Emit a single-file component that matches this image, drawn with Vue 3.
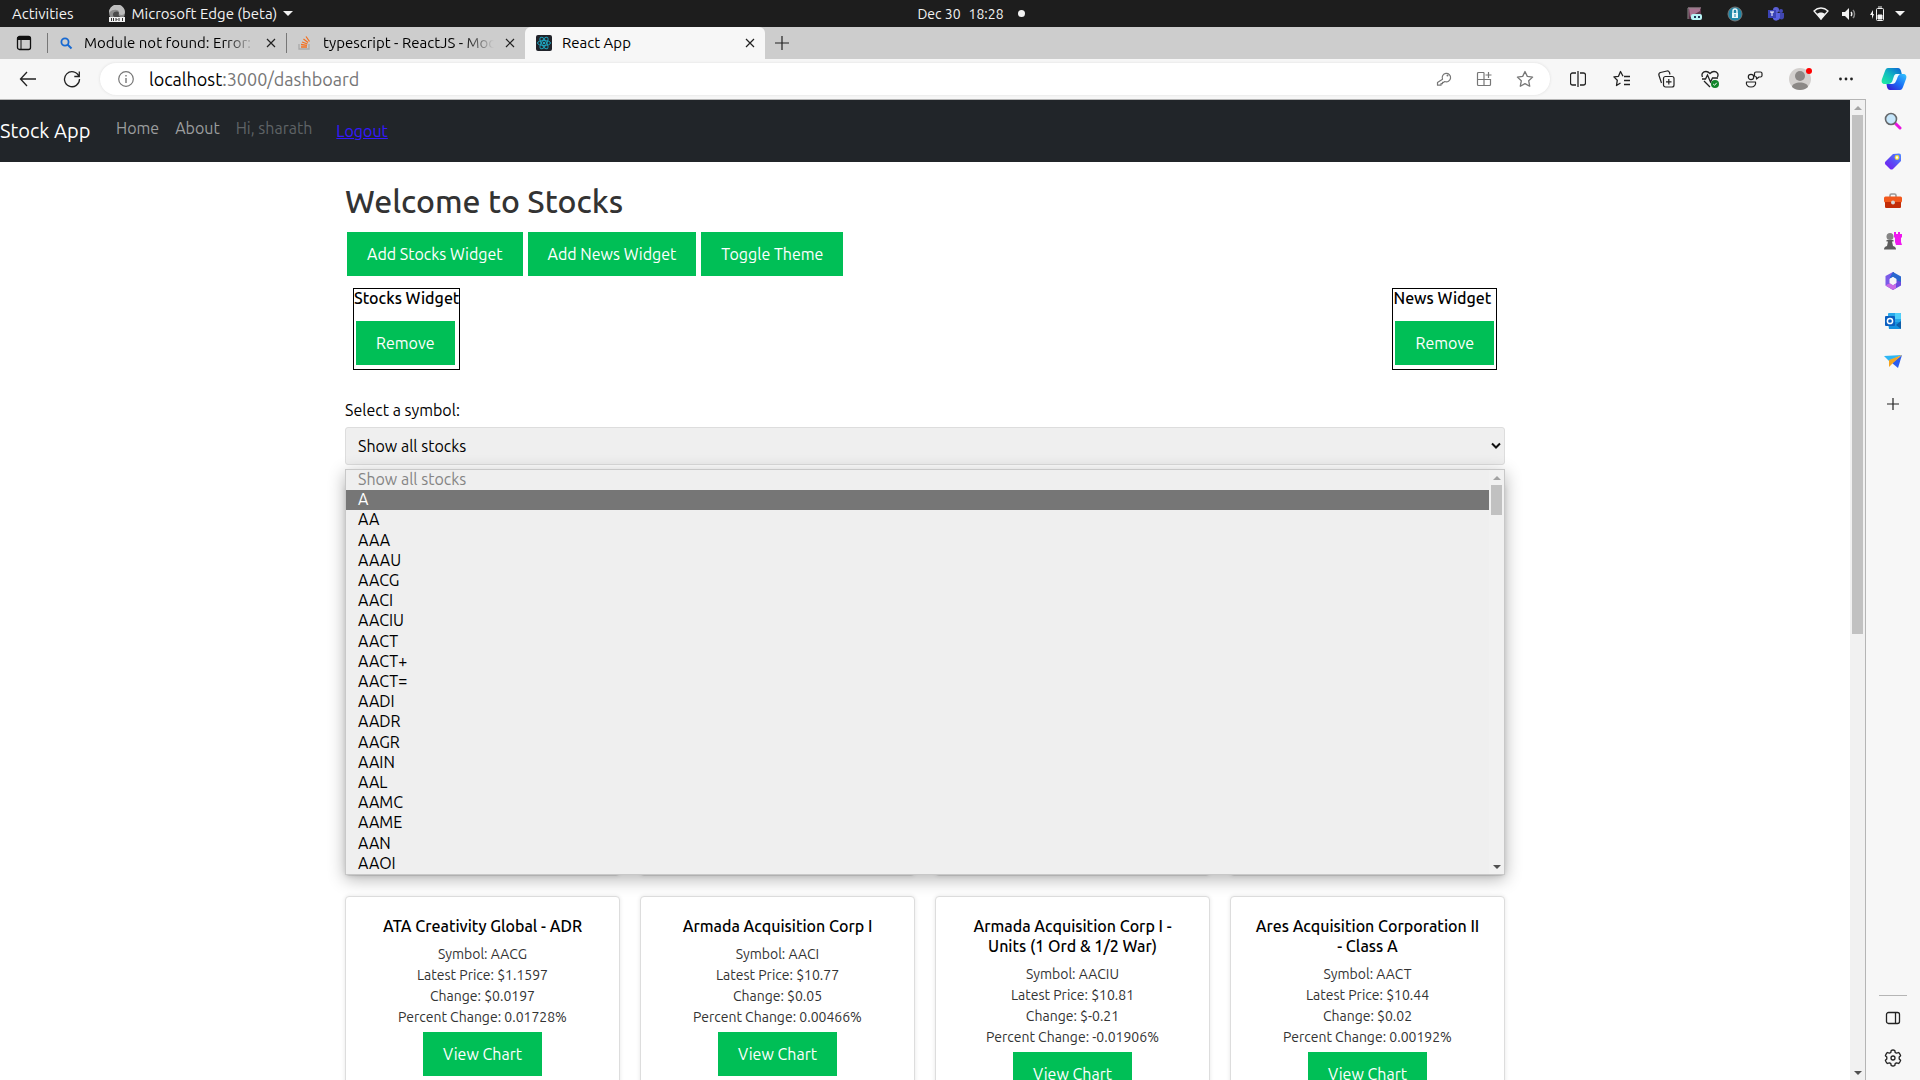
<script setup>
import { ref } from 'vue'

const backTabs = [
  { title: 'Module not found: Error:', icon: 'search' },
  { title: 'typescript - ReactJS - Mod', icon: 'stack' }
]

const symbols = [
  'A', 'AA', 'AAA', 'AAAU', 'AACG', 'AACI', 'AACIU', 'AACT', 'AACT+', 'AACT=',
  'AADI', 'AADR', 'AAGR', 'AAIN', 'AAL', 'AAMC', 'AAME', 'AAN', 'AAOI'
]
const selected = ref('')
const active = ref('A')

const stocks = [
  { name: 'ATA Creativity Global - ADR', symbol: 'AACG', price: '1.1597', change: '0.0197', percent: '0.01728' },
  { name: 'Armada Acquisition Corp I', symbol: 'AACI', price: '10.77', change: '0.05', percent: '0.00466' },
  { name: 'Armada Acquisition Corp I - Units (1 Ord & 1/2 War)', symbol: 'AACIU', price: '10.81', change: '-0.21', percent: '-0.01906' },
  { name: 'Ares Acquisition Corporation II - Class A', symbol: 'AACT', price: '10.44', change: '0.02', percent: '0.00192' }
]
</script>

<template>
  <div class="screen">
    <header class="topbar">
      <div class="top-left">
        <span>Activities</span>
        <span class="app-menu">
          <svg width="18" height="18" viewBox="0 0 18 18">
            <circle cx="9" cy="8" r="8" fill="#8d8d8d" />
            <path d="M1 8a8 8 0 0 1 16-1c0 3-4 4-6 2 1-3-2-5-5-4-3 0-4 2-5 3z" fill="#bdbdbd" />
            <path d="M5 9c1-3 5-3 6-1-1 2 0 4 3 4H7C5 12 5 10 5 9z" fill="#4a4a4a" />
            <rect x="1" y="12" width="16" height="5" fill="#f2f2f2" />
            <path d="M3.500 13v3M5.500 13v3M8 13v3M8.500 14.500h1M11 13v3M14.500 13v3" stroke="#333" fill="none" />
          </svg>
          <span>Microsoft Edge (beta)</span>
          <svg width="10" height="6" viewBox="0 0 10 6"><path d="M0 0h10L5 5z" fill="#f2f2f2" /></svg>
        </span>
      </div>
      <div class="clock"><span>Dec 30</span><span>18:28</span><i class="dot"></i></div>
      <div class="tray">
        <svg width="16" height="16" viewBox="0 0 16 16">
          <rect x="1" y="1" width="13" height="12" fill="#5c3348" /><path d="M2 2h11v3L3 11z" fill="#a97391" />
          <path d="M1 13V2h13" stroke="#888" fill="none" />
          <rect x="4" y="8" width="11" height="6" rx="2" fill="#b7f3f5" /><path d="M7 11h2M12 10v2" stroke="#235" stroke-width="2" />
        </svg>
        <svg width="16" height="16" viewBox="0 0 16 16">
          <circle cx="8" cy="8" r="7" fill="#1f87a8" stroke="#777" /><rect x="5" y="7" width="6" height="5" fill="#e8f6fa" />
          <path d="M6 7V5a2 2 0 0 1 4 0v2" stroke="#e8f6fa" stroke-width="1.500" fill="none" /><path d="M8 8v3" stroke="#1f87a8" />
        </svg>
        <svg width="18" height="16" viewBox="0 0 18 16">
          <circle cx="9" cy="4" r="3" fill="#5b5fd6" /><circle cx="14" cy="5" r="2" fill="#454bb8" />
          <path d="M6 7h7v5a4 4 0 0 1-7 1z" fill="#5b62e0" /><path d="M13 7h4v4c0 2-2 3-4 2z" fill="#4147b0" />
          <rect x="1" y="4" width="8" height="8" fill="#3b43b5" /><path d="M3 6h4M5 6v4" stroke="#fff" />
        </svg>
        <svg class="wifi" width="16" height="14" viewBox="0 0 16 14">
          <path d="M1 4c4-4 10-4 14 0L8 12z" fill="none" stroke="#f2f2f2" stroke-width="1.3" /><path d="M4 7c2-2 6-2 8 0l-4 6z" fill="#f2f2f2" />
        </svg>
        <svg width="16" height="14" viewBox="0 0 16 14">
          <path d="M1 5h3l4-4v12L4 9H1z" fill="#f2f2f2" /><path d="M10 5c1 1 1 3 0 4" fill="none" stroke="#f2f2f2" stroke-width="1.5" /><path d="M12 3c2 2 2 6 0 8" fill="none" stroke="#888" stroke-width="1.5" />
        </svg>
        <svg class="battery" width="16" height="16" viewBox="0 0 16 16">
          <path d="M4 4 1 9h2v4l2-5H4z" fill="#f2f2f2" /><rect x="7.5" y="2.5" width="7" height="12" rx="1" fill="none" stroke="#f2f2f2" /><path d="M9 1h4M9 9h4v4H9z" fill="#f2f2f2" stroke="#f2f2f2" />
        </svg>
        <svg class="caret" width="10" height="6" viewBox="0 0 10 6"><path d="M0 0h10L5 5z" fill="#f2f2f2" /></svg>
      </div>
    </header>

    <div class="tabstrip">
      <button class="tab-actions" aria-label="Tab actions">
        <svg width="16" height="16" viewBox="0 0 16 16"><rect x="1.5" y="1.5" width="13" height="13" rx="2" fill="none" stroke="#111" stroke-width="1.3" /><path d="M1 2h14v3H1z" fill="#111" /><path d="M5 5v9" stroke="#111" /></svg>
      </button>
      <div v-for="tab in backTabs" :key="tab.icon" class="tab">
        <svg v-if="tab.icon === 'search'" width="14" height="14" viewBox="0 0 14 14"><circle cx="6" cy="6" r="3.6" fill="none" stroke="#1769d2" stroke-width="1.8" /><path d="m8.500 8.500 4 4" stroke="#1769d2" stroke-width="2" /></svg>
        <svg v-else width="14" height="16" viewBox="0 0 14 16"><path d="M1 9v5h10V9" fill="none" stroke="#a9a9a9" stroke-width="1.3" /><path d="M3 12h6M3 9.500l6 .8M4 7l5.500 2M5.500 4l4.500 3.500M8 1.500l3.500 5" stroke="#f37021" stroke-width="1.3" fill="none" /></svg>
        <span class="tab-title faded">{{ tab.title }}</span>
        <button class="close" aria-label="Close tab"><svg width="10" height="10" viewBox="0 0 10 10"><path d="m1 1 8 8M9 1 1 9" stroke="#222" stroke-width="1.2" /></svg></button>
      </div>
      <div class="tab current">
        <svg width="16" height="16" viewBox="0 0 16 16"><rect width="16" height="16" rx="2" fill="#20232a" /><g fill="none" stroke="#1ea2bd"><ellipse cx="8" cy="8" rx="6.500" ry="2.500" /><ellipse cx="8" cy="8" rx="6.500" ry="2.500" transform="rotate(60 8 8)" /><ellipse cx="8" cy="8" rx="6.500" ry="2.500" transform="rotate(120 8 8)" /></g><circle cx="8" cy="8" r="1.300" fill="#1ea2bd" /></svg>
        <span class="tab-title">React App</span>
        <button class="close" aria-label="Close tab"><svg width="10" height="10" viewBox="0 0 10 10"><path d="m1 1 8 8M9 1 1 9" stroke="#222" stroke-width="1.2" /></svg></button>
      </div>
      <button class="new-tab" aria-label="New tab"><svg width="14" height="14" viewBox="0 0 14 14"><path d="M7 0v14M0 7h14" stroke="#222" stroke-width="1.2" /></svg></button>
    </div>

    <div class="toolbar">
      <button class="tool" aria-label="Back"><svg width="18" height="16" viewBox="0 0 18 16"><path d="M8 1 1.500 8 8 15M1.500 8H17" fill="none" stroke="#222" stroke-width="1.3" /></svg></button>
      <button class="tool" aria-label="Refresh"><svg width="18" height="18" viewBox="0 0 18 18"><path d="M16 6.500A7.500 7.500 0 1 0 16.500 9M16.300 1.500v5h-5" fill="none" stroke="#222" stroke-width="1.3" /></svg></button>
      <div class="address">
        <svg width="16" height="16" viewBox="0 0 16 16"><circle cx="8" cy="8" r="7.300" fill="none" stroke="#777" stroke-width="1.200" /><path d="M8 7v5M8 4v1.500" stroke="#777" stroke-width="1.400" /></svg>
        <span class="url"><b>localhost</b>:3000/dashboard</span>
        <svg width="16" height="16" viewBox="0 0 16 16"><path d="M6.500 8.200a4.200 4.200 0 1 1 2.300 2.300L7.700 11.300H6.500v1.400H5v1.500H1.500v-2.700z" fill="none" stroke="#777" stroke-width="1.200" stroke-linejoin="round" /><circle cx="11.500" cy="4.500" r="1" fill="#777" /></svg>
        <svg width="16" height="16" viewBox="0 0 16 16"><path d="M8 1.500H2.500a1 1 0 0 0-1 1v11a1 1 0 0 0 1 1h11a1 1 0 0 0 1-1V8.500h-13M8 1.500v13M12.500 1v6M9.500 4h6" fill="none" stroke="#777" stroke-width="1.200" /></svg>
        <svg width="18" height="18" viewBox="0 0 18 18"><path d="m9 1.500 2.300 4.900 5.300.7-3.900 3.700 1 5.400L9 13.600l-4.700 2.600 1-5.400L1.400 7.100l5.300-.7z" fill="none" stroke="#777" stroke-width="1.300" stroke-linejoin="round" /></svg>
      </div>
      <div class="tools">
        <button class="tool" aria-label="Split screen"><svg width="16" height="18" viewBox="0 0 16 18"><path d="M6 3H2.500a2 2 0 0 0-2 2v8a2 2 0 0 0 2 2H6M10 3h3.500a2 2 0 0 1 2 2v8a2 2 0 0 1-2 2H10M8 1v16" fill="none" stroke="#222" stroke-width="1.300" /></svg></button>
        <button class="tool" aria-label="Favorites"><svg width="18" height="18" viewBox="0 0 18 18"><path d="M10 6.300 7.500 1.500 5.500 6.300l-4.600.6 3.400 3.300-.8 5.300L7.500 13M11 6.500h6M11 10.500h6M11 14.500h6" fill="none" stroke="#222" stroke-width="1.300" stroke-linejoin="round" /></svg></button>
        <button class="tool" aria-label="Collections"><svg width="18" height="18" viewBox="0 0 18 18"><rect x="6.500" y="6.500" width="10.500" height="10.500" rx="2" fill="none" stroke="#222" stroke-width="1.200" /><path d="M11.800 9v5.500M9 11.800h5.500M4.500 13 2 5.500C1.500 4 2 3 3.500 2.500L10 1c1.500-.3 2 .5 2.500 1.500l.5 2" fill="none" stroke="#222" stroke-width="1.200" /></svg></button>
        <button class="tool" aria-label="Browser essentials"><svg width="18" height="18" viewBox="0 0 18 18"><path d="M1.500 7C0 4 2 1.500 5 1.500c2 0 3 1 4 2 1-1 2-2 4-2 3 0 5 2.500 3.500 5.500M1 9h3.500L6.500 5l3 7 2-4h5.500M3 11l6 6" fill="none" stroke="#222" stroke-width="1.300" /><circle cx="14" cy="14" r="4" fill="#12852a" /><path d="m12.200 14 1.300 1.300 2.200-2.500" fill="none" stroke="#fff" /></svg></button>
        <button class="tool" aria-label="Feedback"><svg width="18" height="18" viewBox="0 0 18 18"><circle cx="6" cy="7" r="2.700" fill="none" stroke="#222" stroke-width="1.200" /><path d="M1.500 12h9c.8 3-1.500 5-4.500 5s-5.300-2-4.500-5zM11 2h4.500c1.200 0 1.500.5 1.500 1.500v2C17 6.500 16.500 7 15.500 7H14l-2.500 2V7C10 7 9.500 6.500 9.500 5.500v-2C9.500 2.500 10 2 11 2z" fill="none" stroke="#222" stroke-width="1.200" stroke-linejoin="round" /></svg></button>
        <button class="tool profile" aria-label="Profile"><svg width="24" height="24" viewBox="0 0 24 24"><circle cx="12" cy="12" r="11" fill="#d3d0ce" /><circle cx="12" cy="9" r="5" fill="#8b8886" /><path d="M4 20c0-6 16-6 16 0-4 4-12 4-16 0z" fill="#8b8886" /><circle cx="21" cy="4" r="3" fill="#f00" /></svg></button>
        <button class="tool" aria-label="More"><svg width="16" height="4" viewBox="0 0 16 4"><g fill="#222"><circle cx="2.500" cy="2" r="1.400" /><circle cx="8" cy="2" r="1.400" /><circle cx="13.500" cy="2" r="1.400" /></g></svg></button>
      </div>
      <button class="tool copilot" aria-label="Copilot">
        <svg width="26" height="24" viewBox="0 0 26 24">
          <defs>
            <linearGradient id="cpA" x1="0" y1="1" x2="1" y2="0"><stop offset="0" stop-color="#1ff2a0" /><stop offset=".5" stop-color="#12b8c0" /><stop offset="1" stop-color="#0a5bd8" /></linearGradient>
            <linearGradient id="cpB" x1="0" y1="1" x2="1" y2="0"><stop offset="0" stop-color="#3a0fd0" /><stop offset=".5" stop-color="#1a6ff5" /><stop offset="1" stop-color="#35c8ff" /></linearGradient>
          </defs>
          <path d="M7 1h10c1.500 0 2.500 1 3 3l.8 3H18c-2 0-3 1-3.500 3l-1.500 5c-.5 1-1 2-3 2H4c-3 0-4-2-3-5l3-8c.7-2 1.500-3 3-3z" fill="url(#cpA)" />
          <path d="M19 23H9c-1.500 0-2.500-1-3-3l-.5-3H9c2 0 3-1 3.500-3L14 9c.5-1 1-2 3-2h5c3 0 4 2 3 5l-3 8c-.7 2-1.500 3-3 3z" fill="url(#cpB)" />
          <path d="M15 7h4l-1 1c-1 1-1.500 2-2 4l-1 2c-.5 2-2 3-4 3H8l2-1c1-1 1.500-2 2-4l1-3c.5-1 1-2 2-2z" fill="#eefaff" />
        </svg>
      </button>
    </div>

    <div class="body">
      <div class="page">
        <nav class="navbar">
          <a class="brand" href="#">Stock App</a>
          <a class="nav-link" href="#">Home</a>
          <a class="nav-link" href="#">About</a>
          <span class="nav-link user">Hi, sharath</span>
          <a class="logout" href="#">Logout</a>
        </nav>

        <main class="container">
          <h1>Welcome to Stocks</h1>
          <div class="actions">
            <button class="btn">Add Stocks Widget</button>
            <button class="btn">Add News Widget</button>
            <button class="btn">Toggle Theme</button>
          </div>
          <div class="widgets">
            <section class="widget"><h2>Stocks Widget</h2><button class="btn">Remove</button></section>
            <section class="widget"><h2>News Widget</h2><button class="btn">Remove</button></section>
          </div>

          <label class="symbol-label" for="symbol">Select a symbol:</label>
          <div class="picker">
            <select id="symbol" v-model="selected">
              <option value="">Show all stocks</option>
              <option v-for="s in symbols" :key="s" :value="s">{{ s }}</option>
            </select>
            <svg class="chevron" width="10" height="8" viewBox="0 0 10 8"><path d="m1 1.500 4 4 4-4" fill="none" stroke="#111" stroke-width="2" /></svg>
            <div class="popup">
              <ul role="listbox" aria-label="Symbols">
                <li class="disabled" role="option" aria-disabled="true">Show all stocks</li>
                <li v-for="s in symbols" :key="s" role="option" :class="{ active: s === active }" @mouseenter="active = s">{{ s }}</li>
              </ul>
              <div class="popup-scroll">
                <svg width="8" height="4" viewBox="0 0 8 4"><path d="M0 4h8L4 0z" fill="#a3a3a3" /></svg>
                <i></i>
                <svg class="down" width="8" height="4" viewBox="0 0 8 4"><path d="M0 0h8L4 4z" fill="#505050" /></svg>
              </div>
            </div>
          </div>

          <div class="cards">
            <div v-for="n in 4" :key="n" class="card covered"></div>
            <article v-for="stock in stocks" :key="stock.symbol" class="card">
              <h3>{{ stock.name }}</h3>
              <p>Symbol: {{ stock.symbol }}</p>
              <p>Latest Price: ${{ stock.price }}</p>
              <p>Change: ${{ stock.change }}</p>
              <p>Percent Change: {{ stock.percent }}%</p>
              <button class="btn">View Chart</button>
            </article>
          </div>
        </main>
      </div>

      <div class="scrollbar">
        <svg width="8" height="4" viewBox="0 0 8 4"><path d="M0 4h8L4 0z" fill="#a3a3a3" /></svg>
        <i></i>
        <svg class="down" width="8" height="4" viewBox="0 0 8 4"><path d="M0 0h8L4 4z" fill="#505050" /></svg>
      </div>

      <aside class="sidebar">
        <button class="side" aria-label="Search"><svg width="18" height="18" viewBox="0 0 18 18"><path d="m11 11 5 5" stroke="#e815e0" stroke-width="3" stroke-linecap="round" /><circle cx="7" cy="7" r="5.500" fill="#c5e6fb" stroke="#66696c" stroke-width="1.600" /></svg></button>
        <button class="side" aria-label="Shopping">
          <svg width="18" height="18" viewBox="0 0 18 18"><defs><linearGradient id="tag" x1="1" y1="0" x2="0" y2="1"><stop offset="0" stop-color="#4f8dff" /><stop offset=".5" stop-color="#5a4cf5" /><stop offset="1" stop-color="#7a15f0" /></linearGradient></defs><path d="M9 2l6-.5c1.200 0 2 .8 2 2V9l-8 8c-1 .8-2 .8-3 0l-4.500-4.500c-.8-1-.8-2 0-3z" fill="url(#tag)" /><circle cx="13" cy="5.500" r="1.800" fill="#fff" stroke="#f2dc3c" stroke-width="1.200" /></svg>
        </button>
        <button class="side" aria-label="Tools"><svg width="18" height="18" viewBox="0 0 18 18"><path d="M6 5V3.500C6 2.500 6.500 2 7.500 2h3c1 0 1.500.5 1.500 1.500V5" fill="none" stroke="#999" stroke-width="1.600" /><rect y="4.500" width="18" height="6" rx="1.500" fill="#f2581c" /><path d="M1 10h16v4.500c0 1-.5 1.500-1.500 1.500h-13c-1 0-1.500-.5-1.500-1.500z" fill="#c22d08" /><circle cx="9" cy="10.500" r="2" fill="#d6d6d6" /></svg></button>
        <button class="side" aria-label="Games"><svg width="18" height="18" viewBox="0 0 18 18"><path d="M10 0h2v2h2V0h2v2h2v3l-1 1v4l1 3h-6l-1-3V6l-1-1z" fill="#ef18ee" /><circle cx="6" cy="4.500" r="3.500" fill="#858585" /><path d="M2.500 8h7v1.500H8l1 4.500c2 .5 3 1.500 3 3.500H0C0 15.500 1 14.500 3 14l1-4.500H2.500z" fill="#5c5c5c" /></svg></button>
        <button class="side" aria-label="Microsoft 365">
          <svg width="18" height="20" viewBox="0 0 18 20"><path d="M9 1 1.500 5v9.500L6 12.500V7.500L10 5V1z" fill="#7b5be8" /><path d="M9 1l8 4.500V12l-5-1V8L9 6 6 7.500V6z" fill="#2a68cf" /><path d="M17 11v3.500L9 19l-7.500-4.500L6 12l3 2 3-2V9z" fill="#6c4be0" /><path d="M1.500 14.500 6 12l3 2 3-1v4L9 19z" fill="#c96be6" /><path d="m9 6 3.500 2v4L9 14l-3.500-2V8z" fill="#f7f7f7" /></svg>
        </button>
        <button class="side" aria-label="Outlook"><svg width="18" height="18" viewBox="0 0 18 18"><rect x="4" y="1" width="13" height="13" rx="1" fill="#28a8ea" /><path d="M11 1h5l1 1v5h-6z" fill="#50d0fa" /><path d="M4 10h13v6c0 .6-.4 1-1 1H5z" fill="#1490df" /><path d="m17 9-5 4 5 4z" fill="#0f5ea8" /><rect x="1" y="4" width="10" height="10" rx="1" fill="#0a5fc0" /><circle cx="6" cy="9" r="2.600" fill="none" stroke="#fff" stroke-width="1.500" /></svg></button>
        <button class="side" aria-label="Drop"><svg width="18" height="18" viewBox="0 0 18 18"><path d="M0 4 18 3 5 9z" fill="#2eb6f4" /><path d="M18 3 8 11l6 5z" fill="#2b5df0" /><path d="m18 3-13 5 0 7 4-4z" fill="#f5a51e" /></svg></button>
        <button class="side" aria-label="Add"><svg width="14" height="14" viewBox="0 0 14 14"><path d="M7 1v12M1 7h12" stroke="#222" stroke-width="1.200" /></svg></button>
        <div class="side-foot">
          <button class="side" aria-label="Hide sidebar"><svg width="16" height="14" viewBox="0 0 16 14"><rect x="1.500" y="1.500" width="13" height="11" rx="2" fill="none" stroke="#222" stroke-width="1.300" /><path d="M10.500 1v12" stroke="#222" stroke-width="1.300" /></svg></button>
          <button class="side" aria-label="Settings"><svg width="18" height="18" viewBox="0 0 18 18"><path d="M9 1c.8 0 1.300.2 1.800.5l.4 2c.5.4 1 .6 1.500.7l2-.7c.9.900 1.600 2 1.900 3.200L15.200 8v2l1.400 1.300c-.3 1.200-1 2.300-1.900 3.200l-2-.7c-.5.100-1 .3-1.500.7l-.4 2c-1.100.6-2.500.6-3.600 0l-.4-2c-.5-.4-1-.6-1.500-.7l-2 .7c-.9-.9-1.600-2-1.900-3.200L2.800 10V8L1.400 6.700c.3-1.200 1-2.300 1.900-3.200l2 .7c.5-.1 1-.3 1.500-.7l.4-2C7.700 1.200 8.200 1 9 1z" fill="none" stroke="#222" stroke-width="1.300" stroke-linejoin="round" /><circle cx="9" cy="9" r="2" fill="none" stroke="#222" stroke-width="1.300" /></svg></button>
        </div>
      </aside>
    </div>
  </div>
</template>

<style>
body { margin: 0; overflow: hidden; background: #fff; }
</style>

<style scoped>
* { box-sizing: border-box; }
.screen { height: 100vh; display: flex; flex-direction: column; overflow: hidden; font-family: Ubuntu, "Noto Sans", sans-serif; font-size: 16px; color: #000; }
button { font-family: inherit; border: 0; padding: 0; background: none; display: flex; align-items: center; justify-content: center; cursor: pointer; }
svg { display: block; flex: none; }
h1, h2, h3, p, ul { margin: 0; padding: 0; }

.topbar { flex: none; height: 27px; background: #1d1d1d; color: #f2f2f2; font-size: 15px; display: grid; grid-template-columns: 1fr auto 1fr; align-items: center; }
.top-left { display: flex; align-items: center; gap: 34px; padding-left: 12px; }
.app-menu { display: flex; align-items: center; gap: 6px; }
.clock { display: flex; align-items: center; gap: 8px; padding-left: 22px; font-size: 14px; }
.dot { width: 7px; height: 7px; border-radius: 50%; background: #f2f2f2; margin-left: 6px; }
.tray { display: flex; align-items: center; justify-content: flex-end; gap: 24px; padding-right: 15px; }
.tray .wifi { margin-left: 4px; }
.tray .wifi + svg { margin-left: -12px; }
.tray .battery { margin-left: -12px; }
.tray .caret { margin-left: -14px; }

.tabstrip { flex: none; height: 32px; background: #cdcdcd; display: flex; align-items: center; font-size: 15px; }
.tab-actions { width: 47px; height: 32px; }
.tab { display: flex; align-items: center; width: 239px; height: 32px; padding: 0 10px 0 12px; gap: 11px; }
.tab:not(.current)::before { content: ""; width: 1px; height: 20px; margin: 0 0 0 -12px; background: #777; }
.tab-title { flex: 1; white-space: nowrap; overflow: hidden; line-height: 20px; }
.faded { mask-image: linear-gradient(to right, #000 82%, transparent); }
.close { width: 10px; height: 20px; }
.current { width: 240px; padding-left: 11px; gap: 10px; background: #f7f7f7; border-radius: 6px 6px 0 0; }
.new-tab { width: 34px; height: 32px; }

.toolbar { flex: none; height: 40px; background: #f7f7f7; display: flex; align-items: center; padding-left: 6px; }
.tool { width: 44px; height: 36px; flex: none; }
.address { flex: 1; height: 32px; margin-left: 6px; border-radius: 16px; background: #fff; box-shadow: 0 0 3px #ddd; display: flex; align-items: center; gap: 24px; padding: 0 16px 0 18px; }
.url { flex: 1; margin-left: -9px; padding-bottom: 1px; font-size: 18px; line-height: 20px; color: #767676; }
.url b { font-weight: 400; color: #000; }
.tools { display: flex; margin-left: 6px; }
.tool.profile { width: 48px; }
.tool.copilot { width: 52px; }

.body { flex: 1; min-height: 0; display: flex; background: #f7f7f7; }
.page { flex: 1; min-width: 0; background: #fff; overflow: hidden; border-top: 1px solid #b5b5b5; }
.navbar { height: 62px; background: #212529; display: flex; align-items: center; }
.navbar a { text-decoration: none; }
.brand { color: #fff; font-size: 20px; width: 116px; padding-bottom: 2px; }
.navbar .nav-link { color: #9b9d9e; margin-right: 16px; padding-bottom: 6px; }
.navbar .user { color: #5f6366; }
.navbar .logout { color: #3418ff; text-decoration: underline; margin-left: 8px; }

.container { max-width: 1160px; margin: 0 auto; padding-top: 20px; }
h1 { font-size: 32px; line-height: 38px; font-weight: 550; color: #333; }
.actions { display: flex; gap: 5px; margin: 12px 2px; }
.btn { height: 44px; padding: 0 20px; background: #00bf56; color: #fff; font-size: 16px; white-space: nowrap; }
.widgets { display: flex; justify-content: space-between; padding: 0 8px; }
.widget { height: 82px; border: 1px solid #000; padding: 0 0 4px; }
.widget h2 { font-size: 16px; line-height: 19px; font-weight: 550; margin-bottom: 13px; }
.widget .btn { margin: 0 2px; }
.symbol-label { display: block; margin: 28px 0 5px; line-height: 24px; }
.picker { position: relative; }
select { display: block; width: 100%; height: 38px; appearance: none; background: #efefef; border: 1px solid #ddd; border-radius: 3px; padding: 0 12px; font: inherit; color: #000; }
.chevron { position: absolute; right: 4px; top: 15px; }
.popup { position: absolute; top: 42px; left: 0; right: 0; height: 406px; z-index: 2; display: flex; background: #efefef; border: 1px solid #c8c8c8; box-shadow: 0 4px 16px rgba(0, 0, 0, .3); }
.popup ul { flex: 1; list-style: none; display: flex; flex-direction: column; }
.popup li { flex: 1; padding-left: 12px; line-height: 18px; }
.popup .disabled { color: #858585; }
.popup .active { background: #767676; color: #fff; }
.popup-scroll, .scrollbar { width: 15px; background: #f1f1f1; display: flex; flex-direction: column; align-items: center; padding: 6px 0 5px; }
.popup-scroll i { width: 11px; height: 30px; margin-top: 5px; background: #c1c1c1; }
.down { margin-top: auto; }

.cards { display: grid; grid-template-columns: repeat(4, 1fr); gap: 20px; padding-top: 20px; }
.card { border: 1px solid #ddd; border-radius: 4px; box-shadow: 0 0 4px rgba(0, 0, 0, .1); padding: 19px 21px 20px; display: flex; flex-direction: column; align-items: center; text-align: center; background: #fff; }
.covered { height: 391px; }
.card h3 { font-size: 16px; line-height: 20px; font-weight: 550; margin-bottom: 8px; }
.card p { font-size: 14px; line-height: 21px; color: #333; }
.card .btn { margin-top: 4px; }

.scrollbar { flex: none; width: 16px; border: solid #b5b5b5; border-width: 1px 1px 0 0; }
.scrollbar i { width: 11px; height: calc(100% * 15 / 28); margin-top: 5px; background: #c1c1c1; }
.sidebar { flex: none; width: 54px; display: flex; flex-direction: column; align-items: center; padding-top: 2px; }
.side { width: 40px; height: 40px; flex: none; }
.side[aria-label="Add"] { margin-top: 3px; }
.side-foot { margin-top: auto; border-top: 1px solid #b5b5b5; padding: 2px 0 2px; width: 28px; display: flex; flex-direction: column; align-items: center; }
</style>
